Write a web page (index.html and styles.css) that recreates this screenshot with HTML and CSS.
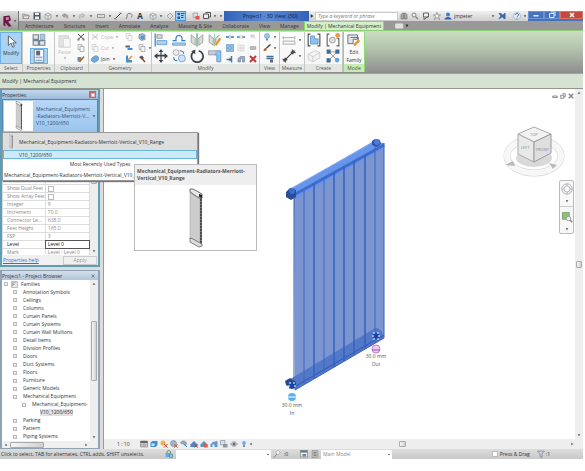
FILE: index.html
```html
<!DOCTYPE html>
<html lang="en">
<head>
    <meta charset="UTF-8">
    <meta name="viewport" content="width=device-width, initial-scale=1.0">
    <title>Project1 - 3D View: {3D}</title>
    <link rel="stylesheet" href="styles.css">
</head>
<body>

<svg class="defs" aria-hidden="true">
    <symbol id="down" viewBox="0 0 6 6"><path d="M1 2h4L3 5z" fill="#555"/></symbol>
    <symbol id="sheet" viewBox="0 0 16 16"><path d="M2 1h8v10H2z" fill="#eee" stroke="#888"/><path d="M6 5h8v10H6z" fill="#f4f4f4" stroke="#778"/></symbol>
    <symbol id="box" viewBox="0 0 16 16"><path d="M2 5l6-3 6 3v7l-6 3-6-3z" fill="#dde4ea" stroke="#777"/><path d="M2 5l6 3 6-3M8 8v7" fill="none" stroke="#777"/></symbol>
    <symbol id="radiator" viewBox="0 0 16 60"><path d="M2 4l10 5v47L2 51z" fill="#ccc" stroke="#999" stroke-width=".5"/><path d="M12 8h2v48h-2z" fill="#777"/><path d="M13 8v48" stroke="#222" stroke-dasharray="2 1"/><path d="M2 1h3l9 5v4h-3L2 4z" fill="#e8e8e8" stroke="#333" stroke-width=".7"/><path d="M11 6l3 1v3l-3-1z" fill="#222"/><path d="M2 50l3 1 9 5v2l-3 1-9-5z" fill="#ddd" stroke="#555" stroke-width=".7"/></symbol>
</svg>

<div class="app">
    <header class="header">
        <button class="app-btn" aria-label="Application menu">
            <svg class="logo" viewBox="0 0 16 18"><path d="M2 2l9-1 2 7-4 2 5 7H9l-4-6v6l-3-2z" fill="#6d1543"/><path d="M5 4l5-1v4L6 8z" fill="#c987a9"/></svg>
            <svg class="caret"><use href="#down"/></svg>
        </button>
        <div class="titlebar">
            <div class="quick">
                <button aria-label="Open"><svg viewBox="0 0 16 16"><path d="M1 4h5l1 2h6v7H2z" fill="#ccc" stroke="#666"/><path d="M4 8h11l-3 5H2z" fill="#eee" stroke="#666"/></svg></button>
                <button aria-label="Save"><svg viewBox="0 0 16 16"><path d="M1 1h14v14H1z" fill="#4b5663"/><path d="M4 2h8v4H4zM4 9h8v5H4z" fill="#eee"/></svg></button>
                <button aria-label="Synchronize"><svg><use href="#box"/></svg></button>
                <svg class="caret"><use href="#down"/></svg>
                <button aria-label="Undo"><svg viewBox="0 0 16 16"><path d="M7 3L2 7l5 4V9c4-1 5 0 5 4 4-6 1-8-5-8z" fill="#aaa" stroke="#777"/></svg></button>
                <svg class="caret"><use href="#down"/></svg>
                <button aria-label="Redo"><svg viewBox="0 0 16 16"><path d="M9 3l5 4-5 4V9c-4-1-5 0-5 4-4-6-1-8 5-8z" fill="#ccc" stroke="#999"/></svg></button>
                <svg class="caret"><use href="#down"/></svg>
                <i class="sep"></i>
                <button aria-label="Measure"><svg viewBox="0 0 16 16"><path d="M1 4v8M15 4v8M8 4v3M2 5h12M2 11h12" stroke="#999" stroke-width="2"/></svg></button>
                <svg class="caret"><use href="#down"/></svg>
                <button aria-label="Aligned dimension"><svg viewBox="0 0 16 16"><path d="M3 13L13 3M1 12l3 3M12 1l3 3" stroke="#444" stroke-width="2"/></svg></button>
                <button aria-label="Tag"><svg viewBox="0 0 16 16"><path d="M2 14l2-4C3 4 7 2 10 3c5 1 5 6 2 8" fill="none" stroke="#777" stroke-width="2"/></svg></button>
                <button class="text-tool" aria-label="Text">A</button>
                <i class="sep"></i>
                <button aria-label="Default 3D view"><svg><use href="#box"/></svg></button>
                <svg class="caret"><use href="#down"/></svg>
                <button aria-label="Section"><svg viewBox="0 0 16 16"><path d="M8 2l6 6-6 6-6-6z" fill="#ddd" stroke="#777"/></svg></button>
                <button class="on" aria-label="Thin lines"><svg viewBox="0 0 16 16"><path d="M1 2h5v4H1zM1 9h5v5H1z" fill="#24578f"/><path d="M8 3h7M8 7h5M8 11h5" stroke="#24578f" stroke-width="2"/></svg></button>
                <i class="sep wide"></i>
                <button aria-label="Close hidden windows"><svg viewBox="0 0 16 16"><path d="M2 2h9v9H2z" fill="#ddd" stroke="#777"/><path d="M7 8h8v7H7z" fill="#d55"/></svg></button>
                <button aria-label="Switch windows"><svg viewBox="0 0 16 16"><path d="M1 4h10v9H1zM5 1h10v9h-4" fill="#eee" stroke="#555" stroke-width="2"/></svg></button>
                <svg class="caret"><use href="#down"/></svg>
                <svg class="caret"><use href="#down"/></svg>
            </div>
            <div class="doc-title">Project1 - 3D View: {3D}</div>
            <div class="info">
                <svg class="caret" viewBox="0 0 6 6"><path d="M1 0l4 3-4 3z" fill="#333"/></svg>
                <input class="search" type="text" aria-label="Search" placeholder="Type a keyword or phrase">
                <button aria-label="Find"><svg viewBox="0 0 16 16"><path d="M2 14V5l3-3h2v12zM9 14V2h2l3 3v9z" fill="#aaa" stroke="#555"/></svg></button>
                <button aria-label="Subscription"><svg viewBox="0 0 16 16"><circle cx="6" cy="6" r="4" fill="#eee" stroke="#888" stroke-width="2"/><path d="M9 9l5 5" stroke="#888" stroke-width="3"/></svg></button>
                <button aria-label="Communication"><svg viewBox="0 0 16 16"><path d="M3 2h10v8H3zM4 11v4M12 9l-8 6" fill="#eee" stroke="#666" stroke-width="2"/></svg></button>
                <button aria-label="Favorites"><svg viewBox="0 0 16 16"><path d="M8 1l2 5h5l-4 3 2 6-5-4-5 4 2-6-4-3h5z" fill="#f4f4f4" stroke="#555"/></svg></button>
                <button class="user"><svg viewBox="0 0 16 16"><circle cx="8" cy="5" r="4" fill="#3c7fd0"/><path d="M1 15c0-7 14-7 14 0z" fill="#2a62b5"/></svg>jmpeter</button>
                <svg class="caret"><use href="#down"/></svg>
                <button aria-label="Exchange apps"><svg viewBox="0 0 16 16"><path d="M1 2h5l3 4 4-4h2v12h-3l-4-4-4 4H1l4-6z" fill="#3767a5"/></svg></button>
                <i class="sep wide"></i>
                <button aria-label="Help"><svg viewBox="0 0 16 16"><circle cx="8" cy="8" r="7" fill="#eaf2fa" stroke="#6288b3"/><path d="M5 6c0-4 6-4 6 0 0 2-3 2-3 4M8 11v2" fill="none" stroke="#3767a5" stroke-width="2"/></svg></button>
                <svg class="caret"><use href="#down"/></svg>
            </div>
            <div class="win-btns">
                <button aria-label="Minimize"><svg viewBox="0 0 16 16"><path d="M3 8h10v3H3z" fill="#dce8fa"/></svg></button>
                <button aria-label="Restore"><svg viewBox="0 0 16 16"><path d="M3 5h9v8H3zM6 2h8v8" fill="none" stroke="#dce8fa" stroke-width="2"/></svg></button>
                <button class="close" aria-label="Close"><svg viewBox="0 0 16 16"><path d="M4 4l8 8M12 4l-8 8" stroke="#fff" stroke-width="3"/></svg></button>
            </div>
        </div>
        <nav class="tabs">
            <button>Architecture</button>
            <button>Structure</button>
            <button>Insert</button>
            <button>Annotate</button>
            <button>Analyze</button>
            <button>Massing &amp; Site</button>
            <button>Collaborate</button>
            <button>View</button>
            <button>Manage</button>
            <button class="active">Modify | Mechanical Equipment</button>
            <button class="cycle" aria-label="Minimize ribbon"><svg viewBox="0 0 20 10"><path d="M1 2h10v6H1z" fill="#ddd" stroke="#eee"/><path d="M15 3h4l-2 4z" fill="#333"/></svg></button>
        </nav>
    </header>

    <div class="ribbon">
        <section class="panel select">
            <button class="big on"><svg viewBox="0 0 16 16"><path d="M5 1v11l3-3 2 5 2-1-2-4h4z" fill="#fff" stroke="#555"/></svg>Modify</button>
            <h2>Select</h2>
        </section>
        <section class="panel props">
            <div class="stack">
                <button class="lg" aria-label="Type properties"><svg viewBox="0 0 24 24"><path d="M2 3h9v8H2zM2 13h9v8H2zM13 13h9v8h-9z" fill="#dfe6ec" stroke="#768594" stroke-width="2"/><path d="M14 2h8v9h-8z" fill="#a9c9e8" stroke="#768594"/></svg></button>
                <button class="lg on" aria-label="Properties"><svg viewBox="0 0 24 24"><path d="M4 1h16v22H4z" fill="#fff" stroke="#456"/><path d="M7 3h7v8H7z" fill="#667"/><path d="M6 13h12v3H6zM6 18h12v3H6z" fill="#8db4dc"/></svg></button>
            </div>
            <h2>Properties</h2>
        </section>
        <section class="panel clip">
            <div class="cols">
                <button class="big off"><svg viewBox="0 0 16 16"><path d="M1 2h11v13H1z" fill="#ccc" stroke="#aaa"/><path d="M6 5h8v10H6z" fill="#f6f6f6" stroke="#aaa"/></svg>Paste<svg class="caret"><use href="#down"/></svg></button>
                <div class="small-stack">
                    <button aria-label="Cut"><svg viewBox="0 0 16 16"><path d="M2 2l12 11M14 2L2 13" stroke="#444" stroke-width="2"/><path d="M1 11h4v4H1zM11 11h4v4h-4z" fill="#777"/></svg></button>
                    <button aria-label="Copy"><svg><use href="#sheet"/></svg></button>
                    <button aria-label="Match type"><svg viewBox="0 0 16 16"><path d="M1 4h7l2 4-6 5H1z" fill="#789"/><path d="M5 14L14 3" stroke="#a66a28" stroke-width="3"/></svg></button>
                </div>
            </div>
            <h2>Clipboard</h2>
        </section>
        <section class="panel geom">
            <div class="geom-grid">
                <button class="off"><svg viewBox="0 0 16 16"><path d="M2 2l12 11M14 2L2 13M3 8h10" stroke="#999" stroke-width="2"/></svg>Cope<svg class="caret"><use href="#down"/></svg></button>
                <button class="off" aria-label="Wall joins"><svg><use href="#sheet"/></svg></button>
                <button aria-label="Split face"><svg viewBox="0 0 16 16"><path d="M2 3l7-2 5 3v9l-7 2-5-4z" fill="#abc" stroke="#567"/><circle cx="9" cy="9" r="4" fill="#4b9bd8"/></svg></button>
                <button class="off"><svg><use href="#sheet"/></svg>Cut<svg class="caret"><use href="#down"/></svg></button>
                <button aria-label="Beam joins"><svg viewBox="0 0 16 16"><path d="M1 3h9v4H1z" fill="#567"/><path d="M5 8h10v4H5z" fill="#3e8fd3"/></svg></button>
                <button aria-label="Offset geometry"><svg><use href="#sheet"/></svg><svg class="caret"><use href="#down"/></svg></button>
                <button><svg viewBox="0 0 16 16"><path d="M4 4l6-3 5 3v6l-8 5-6-3V7z" fill="#6ba9df" stroke="#3b78b5"/></svg>Join<svg class="caret"><use href="#down"/></svg></button>
                <button aria-label="Paint"><svg viewBox="0 0 16 16"><path d="M2 1h4v9h8v5H2z" fill="#3e8fd3"/><path d="M6 10L14 2" stroke="#e09030" stroke-width="3"/></svg></button>
                <button aria-label="Demolish"><svg viewBox="0 0 16 16"><path d="M2 4l6-3 4 5-5 3z" fill="#555"/><path d="M8 7l6 7" stroke="#8a4a24" stroke-width="3"/></svg></button>
            </div>
            <h2>Geometry</h2>
        </section>
        <section class="panel modify">
            <div class="cols">
                <div class="large-grid">
                    <button aria-label="Align"><svg viewBox="0 0 24 24"><path d="M2 1v22" stroke="#357fc0" stroke-width="2"/><path d="M5 3h9v6H5z" fill="#ddd" stroke="#666"/><path d="M5 13h17v7H5z" fill="#a9d0ef" stroke="#357fc0"/></svg></button>
                    <button aria-label="Offset"><svg viewBox="0 0 24 24"><path d="M1 13h6c-3-12 13-12 10 0h6" fill="none" stroke="#357fc0" stroke-width="2"/><path d="M1 17h22v4H1z" fill="#a9d0ef" stroke="#357fc0"/></svg></button>
                    <button aria-label="Mirror axis"><svg viewBox="0 0 24 24"><path d="M2 3l7 6v12l-7-5zM22 3l-7 6v12l7-5z" fill="#ddd" stroke="#777"/><path d="M12 1v22" stroke="#48a06a" stroke-width="2"/></svg></button>
                    <button aria-label="Mirror draw"><svg viewBox="0 0 24 24"><path d="M2 3l7 6v12l-7-5zM20 3l-7 6v8" fill="#ddd" stroke="#777"/><path d="M11 1v22" stroke="#48a06a"/><path d="M13 21L21 9" stroke="#e8973a" stroke-width="4"/></svg></button>
                    <button aria-label="Move"><svg viewBox="0 0 24 24"><path d="M12 0l4 5h-3v5h5V7l6 5-6 5v-4h-5v6h3l-4 5-4-5h3v-6H6v4l-6-5 6-5v3h5V5H8z" fill="#3d434b"/></svg></button>
                    <button aria-label="Copy"><svg viewBox="0 0 24 24"><circle cx="7" cy="6" r="5" fill="#eee" stroke="#888"/><circle cx="17" cy="16" r="6" fill="#cfe5f7" stroke="#357fc0"/><path d="M13 3c5 0 7 2 7 5M3 14c0 5 3 6 6 6" fill="none" stroke="#357fc0" stroke-width="2"/></svg></button>
                    <button aria-label="Rotate"><svg viewBox="0 0 24 24"><path d="M6 5a10 10 0 1 0 9-2" fill="none" stroke="#3d434b" stroke-width="3"/><path d="M9 1v8L2 4z" fill="#3d434b"/></svg></button>
                    <button aria-label="Trim"><svg viewBox="0 0 24 24"><path d="M1 3h13v7H1z" fill="#ccd" stroke="#778"/><path d="M14 3h8v19h-7V10h-4" fill="#8fc1ea" stroke="#357fc0"/></svg></button>
                </div>
                <div class="small-grid">
                    <button aria-label="Split"><svg viewBox="0 0 16 16"><path d="M0 6h6v4H0zM10 6h6v4h-6z" fill="#5a9bd4"/><path d="M8 3v10" stroke="#567"/></svg></button>
                    <button aria-label="Split with gap"><svg viewBox="0 0 16 16"><path d="M0 6h5v4H0zM11 6h5v4h-5z" fill="#5a9bd4"/><path d="M6 4v8M10 4v8" stroke="#e08840"/></svg></button>
                    <button class="off" aria-label="Unpin"><svg viewBox="0 0 16 16"><path d="M3 3h8v5l4 5-6-4H3z" fill="#aaa"/></svg></button>
                    <button aria-label="Array"><svg viewBox="0 0 16 16"><path d="M1 1h6v6H1zM9 1h6v6H9zM1 9h6v6H1zM9 9h6v6H9z" fill="#8fc1ea" stroke="#357fc0"/></svg></button>
                    <button class="off" aria-label="Scale"><svg viewBox="0 0 16 16"><path d="M2 2h12v12H2zM2 8h12M8 2v12" fill="#eee" stroke="#888"/></svg></button>
                    <button aria-label="Pin"><svg viewBox="0 0 16 16"><path d="M3 5h10v6H3zM1 8h14" fill="#ccc" stroke="#888"/></svg></button>
                    <button aria-label="Trim single"><svg viewBox="0 0 16 16"><path d="M1 9h9M11 2v13" stroke="#357fc0" stroke-width="3"/><path d="M7 5l4 4-4 4" fill="#555"/></svg></button>
                    <button aria-label="Trim multiple"><svg viewBox="0 0 16 16"><path d="M2 14V7l5-4h8v11h-4V7H7v7z" fill="#8fb6d8" stroke="#567"/></svg></button>
                    <button aria-label="Delete"><svg viewBox="0 0 16 16"><path d="M2 2l12 12M14 2L2 14" stroke="#c03a35" stroke-width="4"/></svg></button>
                </div>
            </div>
            <h2>Modify</h2>
        </section>
        <section class="panel view">
            <div class="small-stack">
                <button aria-label="Hide"><svg viewBox="0 0 16 16"><circle cx="8" cy="6" r="5" fill="#9cc9f2" stroke="#4484c4"/><path d="M6 11h4v4H6z" fill="#888"/></svg><svg class="caret"><use href="#down"/></svg></button>
                <button aria-label="Override"><svg viewBox="0 0 16 16"><path d="M15 1L7 8" stroke="#444" stroke-width="3"/><path d="M1 14c1-6 4-7 7-5-1 5-4 5-7 5z" fill="#b4572e"/></svg><svg class="caret"><use href="#down"/></svg></button>
                <button aria-label="Linework"><svg viewBox="0 0 16 16"><path d="M1 3h14M1 7h14" stroke="#46729c" stroke-width="3"/><path d="M8 9h6v6H8z" fill="#667"/></svg></button>
            </div>
            <h2>View</h2>
        </section>
        <section class="panel measure">
            <div class="stack">
                <button class="lg" aria-label="Measure"><svg viewBox="0 0 24 24"><path d="M2 5v6M22 5v6M2 8h20M2 14h20v5H2z" fill="none" stroke="#bbb" stroke-width="2"/></svg><svg class="caret"><use href="#down"/></svg></button>
                <button class="lg" aria-label="Dimension"><svg viewBox="0 0 24 24"><path d="M4 20L20 4M1 17l6 6M17 1l6 6" stroke="#444" stroke-width="2"/><path d="M2 22l3-8 5 5zM22 2l-3 8-5-5z" fill="#444"/></svg><svg class="caret"><use href="#down"/></svg></button>
            </div>
            <h2>Measure</h2>
        </section>
        <section class="panel create">
            <div class="large-grid two">
                <button aria-label="Create similar"><svg viewBox="0 0 24 24"><path d="M6 2H2v20h4M18 2h4v20h-4" fill="none" stroke="#555" stroke-width="2"/><path d="M6 5h7v5h6v9H6z" fill="#8fc1ea" stroke="#357fc0"/></svg></button>
                <button aria-label="Create group"><svg viewBox="0 0 24 24"><path d="M6 2H2v20h4M18 9h4v13h-4" fill="none" stroke="#666" stroke-width="2"/><circle cx="11" cy="12" r="5" fill="#ddd" stroke="#777"/><circle cx="20" cy="4" r="4" fill="#ef9a3d"/></svg></button>
                <button class="off" aria-label="Create part"><svg viewBox="0 0 24 24"><path d="M2 9l12-6 8 3v9l-12 7-8-4zM2 9l8 4 12-7M10 13v9" fill="#eee" stroke="#777"/></svg></button>
                <button aria-label="Create assembly"><svg viewBox="0 0 24 24"><path d="M5 5l14 14M19 5L5 19M5 5h14" stroke="#666"/><path d="M1 1h7v7H1zM16 1h7v7h-7zM1 16h7v7H1z" fill="#456b91"/><circle cx="19" cy="19" r="4" fill="#65a5df"/></svg></button>
            </div>
            <h2>Create</h2>
        </section>
        <section class="panel mode">
            <button class="big"><svg viewBox="0 0 16 16"><path d="M1 1h11v5H7v5H1z" fill="#dde4ea" stroke="#667"/><path d="M4 4h9v6" fill="none" stroke="#667"/><path d="M8 13l6-6" stroke="#e8973a" stroke-width="3"/></svg>Edit<br>Family</button>
            <h2>Mode</h2>
        </section>
    </div>

    <div class="options-bar">Modify | Mechanical Equipment</div>

    <main class="workspace">
        <aside class="side">
            <section class="palette properties">
                <div class="palette-head"><h3>Properties</h3><button class="x red" aria-label="Close properties"><svg viewBox="0 0 8 8"><path d="M2 2l4 4M6 2L2 6" stroke="#fff" stroke-width="2"/></svg></button></div>
                <button class="type-selector">
                    <span class="thumb"><svg><use href="#radiator"/></svg></span>
                    <span class="type-name">Mechanical_Equipment<br>-Radiators-Merriott-V...<br>V10_1200/650</span>
                    <svg class="caret"><use href="#down"/></svg>
                </button>
                <div class="type-popup">
                    <button class="family"><svg><use href="#radiator"/></svg>Mechanical_Equipment-Radiators-Merriott-Vertical_V10_Range</button>
                    <button class="type">V10_1200/650</button>
                    <div class="recent">Most Recently Used Types</div>
                    <button class="recent-type">Mechanical_Equipment-Radiators-Merriott-Vertical_V10_Range</button>
                    <div class="tooltip">
                        <strong>Mechanical_Equipment-Radiators-Merriott-Vertical_V10_Range</strong>
                        <div class="preview"><svg><use href="#radiator"/></svg></div>
                    </div>
                </div>
                <div class="prop-scroll">
                    <table class="prop-table">
                        <tr><th colspan="2"></th></tr>
                        <tr><th colspan="2"></th></tr>
                        <tr><th></th><td></td></tr>
                        <tr><th></th><td></td></tr>
                        <tr><th></th><td></td></tr>
                        <tr><th></th><td></td></tr>
                        <tr><th><label for="dual">Show Dual Feet</label></th><td><input type="checkbox" id="dual"></td></tr>
                        <tr><th><label for="array">Show Array Feet</label></th><td><input type="checkbox" id="array"></td></tr>
                        <tr><th>Integer</th><td>9</td></tr>
                        <tr><th>Increment</th><td>70.0</td></tr>
                        <tr><th>Connector Le...</th><td>638.0</td></tr>
                        <tr><th>Feet Height</th><td>165.0</td></tr>
                        <tr><th>FSP</th><td>3</td></tr>
                        <tr class="level"><th><label for="level">Level</label></th><td><input type="text" id="level" value="Level 0"></td></tr>
                        <tr><th>Mark</th><td>Level : Level 0</td></tr>
                    </table>
                    <div class="vbar"><i class="thumb-bar"></i><svg class="caret"><use href="#down"/></svg></div>
                </div>
                <div class="prop-foot"><a href="#">Properties help</a><button disabled>Apply</button></div>
            </section>

            <section class="palette browser">
                <div class="palette-head"><h3>Project1 - Project Browser</h3><button class="x" aria-label="Close browser"><svg viewBox="0 0 8 8"><path d="M2 2l4 4M6 2L2 6" stroke="#567"/></svg></button></div>
                <div class="tree-wrap">
                    <ul class="tree">
                        <li class="root"><button aria-label="Collapse">-</button><svg class="fam" viewBox="0 0 12 12"><path d="M1 1h10v10H1z" fill="#eee" stroke="#888"/><path d="M3 9V3h5M3 6h4" fill="none" stroke="#777"/></svg>Families</li>
                        <li><button aria-label="Expand">+</button>Annotation Symbols</li>
                        <li><button aria-label="Expand">+</button>Ceilings</li>
                        <li><button aria-label="Expand">+</button>Columns</li>
                        <li><button aria-label="Expand">+</button>Curtain Panels</li>
                        <li><button aria-label="Expand">+</button>Curtain Systems</li>
                        <li><button aria-label="Expand">+</button>Curtain Wall Mullions</li>
                        <li><button aria-label="Expand">+</button>Detail Items</li>
                        <li><button aria-label="Expand">+</button>Division Profiles</li>
                        <li><button aria-label="Expand">+</button>Doors</li>
                        <li><button aria-label="Expand">+</button>Duct Systems</li>
                        <li><button aria-label="Expand">+</button>Floors</li>
                        <li><button aria-label="Expand">+</button>Furniture</li>
                        <li><button aria-label="Expand">+</button>Generic Models</li>
                        <li><button aria-label="Collapse">-</button>Mechanical Equipment</li>
                        <li class="sub"><button aria-label="Collapse">-</button>Mechanical_Equipment-</li>
                        <li class="leaf"><span>V10_1200/650</span></li>
                        <li><button aria-label="Expand">+</button>Parking</li>
                        <li><button aria-label="Expand">+</button>Pattern</li>
                        <li><button aria-label="Expand">+</button>Piping Systems</li>
                    </ul>
                    <div class="vbar"><svg class="caret up"><use href="#down"/></svg><i class="thumb-bar"></i><svg class="caret"><use href="#down"/></svg></div>
                </div>
                <div class="hbar"><svg class="caret left"><use href="#down"/></svg><i class="thumb-bar"></i><svg class="caret right"><use href="#down"/></svg></div>
            </section>
        </aside>

        <section class="view-area">
            <div class="canvas">
                <div class="view-btns">
                    <button aria-label="Minimize view"><svg viewBox="0 0 8 8"><path d="M1 4h6v2H1z" fill="#fff" stroke="#666"/></svg></button>
                    <button aria-label="Restore view"><svg viewBox="0 0 8 8"><path d="M1 3h4v4H1zM3 1h4v4H5" fill="none" stroke="#666"/></svg></button>
                    <button aria-label="Close view"><svg viewBox="0 0 8 8"><path d="M1 1l6 6M7 1L1 7" stroke="#888" stroke-width="2"/></svg></button>
                </div>
                <svg class="cube" viewBox="0 0 62 52">
                    <ellipse cx="31" cy="31" rx="27" ry="17" fill="none" stroke="#d4d4d4" stroke-width="7"/>
                    <ellipse cx="31" cy="31" rx="27" ry="17" fill="none" stroke="#f7f7f7" stroke-width="6"/>
                    <ellipse cx="31" cy="33" rx="18" ry="9" fill="#d9d9d9"/>
                    <path d="M2 40l8-4 2 5zM46 38l8 2-4 4z" fill="#bbb"/>
                    <path d="M31 2l17 7-17 8L15 9z" fill="#f2f2f2" stroke="#aaa"/>
                    <path d="M15 9l16 8v20l-16-8z" fill="#e9e9e9" stroke="#aaa"/>
                    <path d="M48 9l-17 8v20l17-9z" fill="#dedede" stroke="#999"/>
                    <text x="27" y="11" class="cube-text">TOP</text>
                    <text x="18" y="24" class="cube-text">LEFT</text>
                    <text x="33" y="26" class="cube-text">FRONT</text>
                </svg>
                <div class="nav-bar">
                    <button aria-label="Steering wheel"><svg viewBox="0 0 16 16"><circle cx="8" cy="8" r="7" fill="#eee" stroke="#aaa"/><circle cx="8" cy="8" r="4" fill="#fff" stroke="#aab"/><path d="M8 1v3M8 12v3M1 8h3M12 8h3" stroke="#aaa"/></svg></button>
                    <svg class="caret"><use href="#down"/></svg>
                    <hr>
                    <button aria-label="Zoom region"><svg viewBox="0 0 16 16"><path d="M2 2h9v9H2z" fill="#8cc27d" stroke="#6a9a5e"/><circle cx="10" cy="10" r="3" fill="#eef" stroke="#888"/><path d="M12 12l3 3" stroke="#888" stroke-width="2"/></svg></button>
                    <svg class="caret"><use href="#down"/></svg>
                </div>
                <svg class="model" viewBox="280 134 110 285">
                    <path d="M294 194L384 144V338L295 390z" fill="#7b95d1"/>
                    <path d="M288 381L292 378 372 330Q377 325 382 332L384 338 295 390z" fill="#4a73c8" opacity=".85"/>
                    <path d="M294 387L384 335" stroke="#2f57ac"/>
                    <path d="M289 190L372 142 384 143V148L295 199z" fill="#6795ec"/>
                    <path d="M292 196L384 145" stroke="#3f6ccb" stroke-width="3"/>
                    <path d="M290 189L374 142" stroke="#82aaf2"/>
                    <path d="M304 189V384M324 178V373M375 146V343" stroke="#4068bb"/>
                    <path d="M314 184V379M334 172V367M344 166V361M354 161V355M365 155V349" stroke="#3561bb" stroke-width="1.5"/>
                    <path d="M294 194V390M384 143V338" stroke="#3561bb"/>
                    <path d="M295 390L384 338" stroke="#3765c3"/>
                    <path d="M286 192l4-4 6 2v7l-5 3-5-3z" fill="#2a4d95"/>
                    <circle cx="292" cy="191" r="3" fill="#3b6cd0"/>
                    <path d="M372 141l3-2 5 1 1 4-4 3-5-2z" fill="#2c54a6"/>
                    <circle cx="377" cy="142" r="3" fill="#4e7cd4"/>
                    <path d="M285 381l5-3 6 4v5l-5 1-5-3z" fill="#274b95"/>
                    <g fill="#1747a8" stroke="#fff" stroke-dasharray="2 2"><path d="M289 383h6v6h-6zM373 333h6v6h-6z"/></g>
                    <circle cx="292" cy="397" r="4" fill="#59b0f1"/><path d="M288 397h8" stroke="#fff"/>
                    <circle cx="376" cy="349" r="4" fill="#f0ccec" stroke="#cc7bc6"/><path d="M372 350h8" stroke="#7f61b8"/>
                    <text x="376" y="358" class="note">30.0 mm</text>
                    <text x="376" y="366" class="note">Out</text>
                    <text x="292" y="407" class="note">30.0 mm</text>
                    <text x="292" y="415" class="note">In</text>
                </svg>
            </div>
            <div class="vbar"><svg class="caret up"><use href="#down"/></svg><i class="thumb-bar"></i><svg class="caret"><use href="#down"/></svg></div>
            <div class="view-bar">
                <span class="scale">1 : 10</span>
                <button aria-label="Detail level"><svg viewBox="0 0 16 16"><path d="M1 2h14v12H1z" fill="#ccc" stroke="#666"/><path d="M1 2h14v4H1z" fill="#666"/><path d="M1 10h14M8 6v8" stroke="#888"/></svg></button>
                <button aria-label="Visual style"><svg viewBox="0 0 16 16"><path d="M1 5l4-3h10v8l-4 4H1z" fill="#3f8fd6"/><path d="M3 7h6v5H3z" fill="#cfe6f8"/></svg></button>
                <button aria-label="Sun path"><svg viewBox="0 0 16 16"><circle cx="6" cy="6" r="5" fill="#f0b545"/><path d="M8 8l7 7M15 8l-7 7" stroke="#cc4433" stroke-width="2"/></svg></button>
                <button aria-label="Shadows"><svg viewBox="0 0 16 16"><circle cx="7" cy="7" r="6" fill="#9cb8d0" stroke="#678"/><path d="M8 9l7 6M15 9l-7 6" stroke="#d05535" stroke-width="2"/></svg></button>
                <button aria-label="Rendering"><svg viewBox="0 0 16 16"><path d="M1 6c3-6 9-5 12 0l-2 6-4-4z" fill="#9aabba" stroke="#567"/><path d="M9 9l5 5" stroke="#4a8aca" stroke-width="2"/></svg></button>
                <button aria-label="Crop view"><svg viewBox="0 0 16 16"><path d="M1 9l7-7 7 7v5H1z" fill="#4b88c6"/><path d="M9 9l6 6M15 9l-6 6" stroke="#d03a30" stroke-width="2"/></svg></button>
                <button aria-label="Show crop"><svg viewBox="0 0 16 16"><path d="M1 9l7-7 7 7v5H1z" fill="#5791cc"/><path d="M8 8h7v7H8z" fill="#d96048"/></svg></button>
                <button aria-label="Lock view"><svg viewBox="0 0 16 16"><path d="M1 9l5-5 9-2v12H1z" fill="#5a97d4"/><path d="M5 9h4v5H5z" fill="#eee"/></svg></button>
                <button aria-label="Temporary hide"><svg viewBox="0 0 16 16"><path d="M1 1h9v9H1z" fill="#ddd" stroke="#678"/><path d="M6 8h9v7H6z" fill="#8a98a5"/></svg></button>
                <button aria-label="Reveal hidden"><svg viewBox="0 0 16 16"><path d="M1 8c4-6 10-6 14 0-4 6-10 6-14 0z" fill="#d0d6dc" stroke="#667"/><circle cx="8" cy="8" r="3" fill="#667"/></svg></button>
                <button aria-label="Worksharing"><svg viewBox="0 0 16 16"><circle cx="8" cy="6" r="4" fill="#72b2ec"/><path d="M6 10h4v4H6z" fill="#789"/></svg></button>
                <svg class="caret left"><use href="#down"/></svg>
                <div class="hscroll"><i class="thumb-bar"></i></div>
                <svg class="caret right"><use href="#down"/></svg>
            </div>
        </section>
    </main>

    <footer class="status">
        <span class="hint">Click to select, TAB for alternates, CTRL adds, SHIFT unselects.</span>
        <svg class="st-icon" viewBox="0 0 16 16"><path d="M4 6V3q4-4 7 0v4" fill="none" stroke="#5b9d60" stroke-width="2"/><path d="M1 6h9v8H1z" fill="#67a7dd"/><path d="M9 8h6v7H9z" fill="#8cc2e8" stroke="#467"/></svg>
        <select class="workset" aria-label="Active workset"><option></option></select>
        <div class="st-group">
            <svg viewBox="0 0 16 16"><path d="M2 15l6-7" stroke="#888" stroke-width="2"/><circle cx="10" cy="5" r="4" fill="#eee" stroke="#999"/></svg>
            <span class="requests">:0</span>
            <svg viewBox="0 0 16 16"><path d="M1 1h14v13H1z" fill="#e5e8eb" stroke="#566"/><path d="M1 1h14v4H1z" fill="#677"/><path d="M5 8h7v5H5z" fill="#789"/></svg>
            <svg viewBox="0 0 16 16"><path d="M2 1h12v14H2z" fill="#bbb" stroke="#888"/><path d="M5 5h6M5 8h6M5 11h6" stroke="#555"/></svg>
        </div>
        <select class="design" aria-label="Design option"><option>Main Model</option></select>
        <div class="press"><input type="checkbox" id="drag"><label for="drag">Press &amp; Drag</label></div>
        <svg class="filter" viewBox="0 0 16 16"><path d="M1 2h14l-5 6v7l-4-2V8z" fill="#ccd" stroke="#567"/></svg>
        <span>:1</span>
    </footer>
</div>

</body>
</html>
```
FILE: styles.css
```css
* {
    box-sizing: border-box;
}
body {
    margin: 0;
    min-height: 100vh;
    padding: 11px 2px 12px 0;
    display: flex;
    flex-direction: column;
    background: white;
    font: 5px/8px "Open Sans", "Noto Sans", sans-serif;
    color: #333;
}
button, input, select {
    font: inherit;
    color: inherit;
    margin: 0;
    padding: 0;
    border: 0;
    background: none;
}
button {
    display: flex;
    align-items: center;
    justify-content: center;
    white-space: nowrap;
}
h2, h3 {
    margin: 0;
    font: inherit;
}
svg {
    width: 8px;
    height: 8px;
    flex: none;
    display: block;
}
input[type="checkbox"] {
    appearance: none;
    display: block;
    width: 6px;
    height: 6px;
    border: 1px solid #bbb;
    background: white;
}
.defs {
    display: none;
}
.caret {
    width: 4px;
    height: 4px;
}
.up { transform: rotate(180deg); }
.left { transform: rotate(90deg); }
.right { transform: rotate(-90deg); }

.app {
    flex: 1;
    display: flex;
    flex-direction: column;
    background: #dcdcdc;
}

/* Title bar and tabs */
.header {
    display: grid;
    grid-template-columns: 19px 1fr;
    grid-template-rows: 10px 9px;
    border-bottom: 1px solid #8ccc72;
    background: #999;
}
.app-btn {
    grid-row: span 2;
    background: linear-gradient(#ddd, #999);
    border-right: 1px solid #777;
}
.app-btn .logo {
    width: 11px;
    height: 14px;
}
.titlebar {
    display: flex;
    background: linear-gradient(#f0f0f0, #cfcfcf);
}
.quick, .info {
    display: flex;
    align-items: center;
}
.quick {
    width: 205px;
    padding-left: 2px;
}
.quick button, .info button {
    width: 11px;
    height: 10px;
}
.quick .caret, .info > .caret {
    width: 6px;
    padding: 0 1px;
}
.quick .on {
    background: #9ccdf5;
    border: 1px solid #4a96d8;
}
.text-tool {
    font-weight: bold;
    font-size: 8px;
}
.sep {
    width: 2px;
}
.sep.wide {
    width: 4px;
}
.doc-title {
    width: 85px;
    padding-left: 8px;
    line-height: 10px;
    text-align: center;
    color: #0d1c40;
    background: linear-gradient(90deg, #3263b8, #5b8bd5, #3263b8);
}
.info {
    flex: 1;
}
.search {
    flex: 1;
    min-width: 0;
    height: 9px;
    padding-left: 2px;
    background: white;
    border: 1px solid #ccc;
}
.search::placeholder {
    color: #777;
    font-style: italic;
}
.info .user {
    width: 48px;
    gap: 2px;
    justify-content: flex-start;
    padding-left: 2px;
}
.win-btns {
    display: flex;
    width: 55px;
    background: #4673bc;
}
.win-btns button {
    width: 16px;
    height: 8px;
    border: 1px solid #6a94d4;
}
.win-btns .close {
    flex: 1;
    background: #c5493a;
    border-color: #d97264;
}
.tabs {
    display: flex;
    padding-left: 1px;
}
.tabs button {
    padding: 0 5px;
    color: #333;
}
.tabs .active {
    background: #d5efc8;
    border: 1px solid #7ee05c;
    border-bottom: 0;
    padding: 0 2px;
}
.tabs .cycle {
    margin-left: 6px;
}
.cycle svg {
    width: 14px;
}

/* Ribbon */
.ribbon {
    display: flex;
    height: 43px;
    padding: 1px 0;
    background: linear-gradient(#cbdec2, #b4c4ae 40%, #8e8e8e);
    border-bottom: 1px solid #8cb37c;
}
.panel {
    display: flex;
    flex-direction: column;
    background: linear-gradient(#fdfdfd, #f5f5f5);
    border-right: 1px solid #c4c8c2;
}
.panel > :first-child {
    flex: 1;
}
.panel h2 {
    line-height: 8px;
    text-align: center;
    background: #e4e6e3;
    color: #555;
}
.select { width: 23px; }
.props { width: 32px; }
.clip { width: 34px; }
.geom { width: 63px; }
.modify { width: 108px; }
.view { width: 20px; }
.measure { width: 25px; }
.create { width: 38px; }
.mode {
    width: 22px;
    border: 1px solid #8edb73;
    border-width: 0 1px;
}
.mode h2 {
    background: #c4ecb4;
}
.big {
    flex-direction: column;
    justify-content: flex-start;
    padding-top: 2px;
}
.big > svg:first-child {
    width: 14px;
    height: 14px;
}
.big.on, .lg.on {
    background: #a9d2f3;
    border: 1px solid #6fb0e6;
}
.off {
    color: #bbb;
}
.off svg {
    opacity: .5;
}
.stack, .small-stack {
    display: flex;
    flex-direction: column;
    align-items: center;
    justify-content: space-around;
}
.lg {
    min-width: 18px;
    height: 16px;
    gap: 2px;
}
.lg > svg:first-child, .large-grid svg {
    width: 14px;
    height: 14px;
}
.cols {
    display: flex;
}
.clip .big {
    flex: 1;
}
.clip .small-stack {
    width: 14px;
}
.small-stack button {
    gap: 2px;
}
.geom-grid {
    display: grid;
    grid-template-columns: 34px 13px 1fr;
    align-items: center;
    padding-left: 2px;
}
.geom-grid button {
    justify-content: flex-start;
    gap: 2px;
}
.large-grid {
    display: grid;
    grid-template-columns: repeat(4, 18px);
    align-items: center;
}
.large-grid.two {
    grid-template-columns: 1fr 1fr;
}
.small-grid {
    flex: 1;
    display: grid;
    grid-template-columns: repeat(3, 1fr);
    align-items: center;
}

.options-bar {
    height: 15px;
    padding-left: 2px;
    line-height: 14px;
    background: #d7e3d2;
    border-bottom: 1px solid #8f988b;
}

/* Palettes */
.workspace {
    flex: 1;
    display: flex;
}
.side {
    width: 100px;
    display: flex;
    flex-direction: column;
    gap: 3px;
}
.palette {
    display: flex;
    flex-direction: column;
    background: #f0f0f0;
    border: 1px solid #8ea3b5;
}
.palette-head {
    display: flex;
    align-items: center;
    justify-content: space-between;
    height: 9px;
    padding: 0 2px 0 0;
    background: linear-gradient(#c3d7ed, #9dbbdc);
}
.browser .palette-head {
    background: linear-gradient(#d5dfeb, #b3c5da);
}
.x {
    width: 7px;
    height: 7px;
}
.x.red {
    background: #c76666;
}
.x svg {
    width: 6px;
    height: 6px;
}
.properties {
    position: relative;
    border-color: #5d9db8;
    border-width: 1px 2px 2px;
}
.type-selector {
    height: 34px;
    padding: 1px;
    justify-content: flex-start;
    background: linear-gradient(#b6d6f6, #9bc5ee);
    border: 1px solid #5387bb;
}
.thumb {
    width: 29px;
    height: 30px;
    display: flex;
    justify-content: center;
    background: white;
}
.thumb svg {
    height: 30px;
}
.type-name {
    flex: 1;
    padding-left: 3px;
    line-height: 7px;
    text-align: left;
    color: #36516e;
}
.type-popup {
    position: absolute;
    z-index: 2;
    top: 42px;
    left: 0;
    width: 196px;
    background: white;
    border: 1px solid #999;
    box-shadow: 1px 1px 1px #777;
}
.type-popup button {
    width: 100%;
    justify-content: flex-start;
}
.type-popup .family {
    height: 17px;
    padding-left: 4px;
    gap: 4px;
    background: #dedede;
}
.family svg {
    height: 15px;
}
.type-popup .type {
    height: 9px;
    padding-left: 15px;
    background: #cdeafb;
    border: 1px solid #68b5e0;
}
.recent {
    text-align: center;
    line-height: 11px;
}
.type-popup .recent-type {
    height: 10px;
    padding-left: 1px;
}
.tooltip {
    position: absolute;
    top: 31px;
    left: 131px;
    width: 123px;
    height: 87px;
    background: white;
    border: 1px solid #bbb;
}
.tooltip strong {
    display: block;
    padding: 3px 2px;
    line-height: 7px;
    background: #eee;
    color: #555;
}
.preview {
    display: flex;
    justify-content: center;
    padding-top: 3px;
}
.preview svg {
    width: 16px;
    height: 60px;
}
.prop-scroll {
    display: flex;
    height: 122px;
    padding-top: 3px;
    overflow: hidden;
}
.prop-table {
    flex: 1;
    table-layout: fixed;
    border-collapse: collapse;
    height: 120px;
    background: white;
    color: #888;
}
.prop-table tr {
    height: 8px;
}
.prop-table th, .prop-table td {
    height: 8px;
    padding: 0 0 0 2px;
    border: 1px solid #ddd;
    font-weight: normal;
    line-height: 7px;
    text-align: left;
    white-space: nowrap;
    overflow: hidden;
}
.prop-table th {
    padding-left: 4px;
}
.prop-table .level {
    color: #111;
}
.prop-table .level td {
    border: 1px double #555;
}
.level input {
    display: block;
    width: 100%;
    height: 7px;
}
.vbar {
    width: 8px;
    display: flex;
    flex-direction: column;
    align-items: center;
    justify-content: space-between;
    padding: 2px 0;
    background: #eee;
}
.thumb-bar {
    display: block;
    border: 1px solid #aaa;
    border-radius: 1px;
    background: linear-gradient(90deg, #f6f6f6, #d0d0d0);
}
.properties .thumb-bar {
    width: 6px;
    height: 46px;
}
.prop-foot {
    display: flex;
    align-items: center;
    justify-content: space-between;
    height: 10px;
    padding: 0 1px;
}
.prop-foot a {
    color: #2a74d4;
}
.prop-foot button {
    width: 34px;
    height: 9px;
    border: 1px solid #ccc;
    color: #999;
}
.browser {
    flex: 1;
    border-width: 1px 2px;
}
.tree-wrap {
    flex: 1;
    display: flex;
}
.tree {
    flex: 1;
    min-width: 0;
    margin: 0;
    padding: 0;
    list-style: none;
    display: grid;
    grid-auto-rows: 1fr;
    background: white;
}
.tree li {
    display: flex;
    align-items: center;
    gap: 6px;
    padding-left: 11px;
    line-height: 7px;
    white-space: nowrap;
    overflow: hidden;
}
.tree button {
    width: 4px;
    height: 4px;
    border: 1px solid #b4bcc8;
    font-size: 4px;
    line-height: 2px;
}
.tree .root {
    padding-left: 2px;
    gap: 3px;
}
.tree .fam {
    width: 7px;
    height: 7px;
}
.tree .sub {
    padding-left: 20px;
}
.tree .leaf {
    padding-left: 38px;
}
.leaf span {
    background: #e0e0e0;
}
.browser .vbar .thumb-bar {
    width: 6px;
    height: 60px;
    margin-bottom: 20px;
}
.hbar {
    display: flex;
    align-items: center;
    justify-content: space-between;
    width: 88px;
    height: 7px;
    padding: 0 2px;
}
.hbar .thumb-bar {
    width: 34px;
    height: 6px;
    margin-right: 38px;
}

/* Drawing area */
.view-area {
    flex: 1;
    display: grid;
    grid-template-columns: 1fr 8px;
    grid-template-rows: 1fr 10px;
    margin-left: 3px;
    border-left: 1px solid #999;
    background: #eee;
}
.canvas {
    position: relative;
    background: white;
}
.view-btns {
    position: absolute;
    top: 4px;
    right: 1px;
    display: flex;
    gap: 2px;
}
.view-btns svg {
    width: 6px;
    height: 6px;
}
.cube {
    position: absolute;
    top: 36px;
    right: 10px;
    width: 62px;
    height: 52px;
}
.cube-text {
    font-size: 4px;
    fill: #888;
}
.nav-bar {
    position: absolute;
    top: 91px;
    right: 1px;
    width: 15px;
    height: 54px;
    display: flex;
    flex-direction: column;
    align-items: center;
    justify-content: space-around;
    background: #f8f8f8;
    border: 1px solid #bbb;
    border-radius: 2px;
}
.nav-bar button svg {
    width: 12px;
    height: 12px;
}
.nav-bar hr {
    width: 100%;
    margin: 0;
    border: 0;
    border-top: 1px solid #ccc;
}
.model {
    position: absolute;
    top: 45px;
    left: 176px;
    width: 110px;
    height: 285px;
}
.note {
    text-anchor: middle;
    fill: #555;
}
.view-area > .vbar .thumb-bar {
    width: 6px;
    height: 7px;
}
.view-bar {
    grid-column: span 2;
    display: flex;
    align-items: center;
    padding: 0 9px 0 13px;
}
.scale {
    width: 22px;
}
.view-bar button {
    width: 10px;
    height: 8px;
}
.hscroll {
    flex: 1;
}
.hscroll .thumb-bar {
    width: 7px;
    height: 6px;
    margin-left: 46%;
}

/* Status bar */
.status {
    display: flex;
    align-items: center;
    height: 10px;
    padding: 0 33px 0 1px;
    background: linear-gradient(#ddd, #c8c8c8);
}
.hint {
    width: 164px;
    white-space: nowrap;
}
.status select {
    appearance: none;
    height: 9px;
    padding-left: 2px;
    color: #888;
    background: linear-gradient(#777, #777) no-repeat right 2px center / 2px 1px white;
}
.workset {
    width: 95px;
    margin-left: 3px;
}
.st-group {
    display: flex;
    width: 50px;
    gap: 3px;
    padding-left: 2px;
}
.requests {
    width: 13px;
}
.design {
    width: 71px;
}
.press {
    display: flex;
    align-items: center;
    gap: 2px;
    margin-left: auto;
}
.filter {
    margin: 0 1px 0 7px;
}
```
